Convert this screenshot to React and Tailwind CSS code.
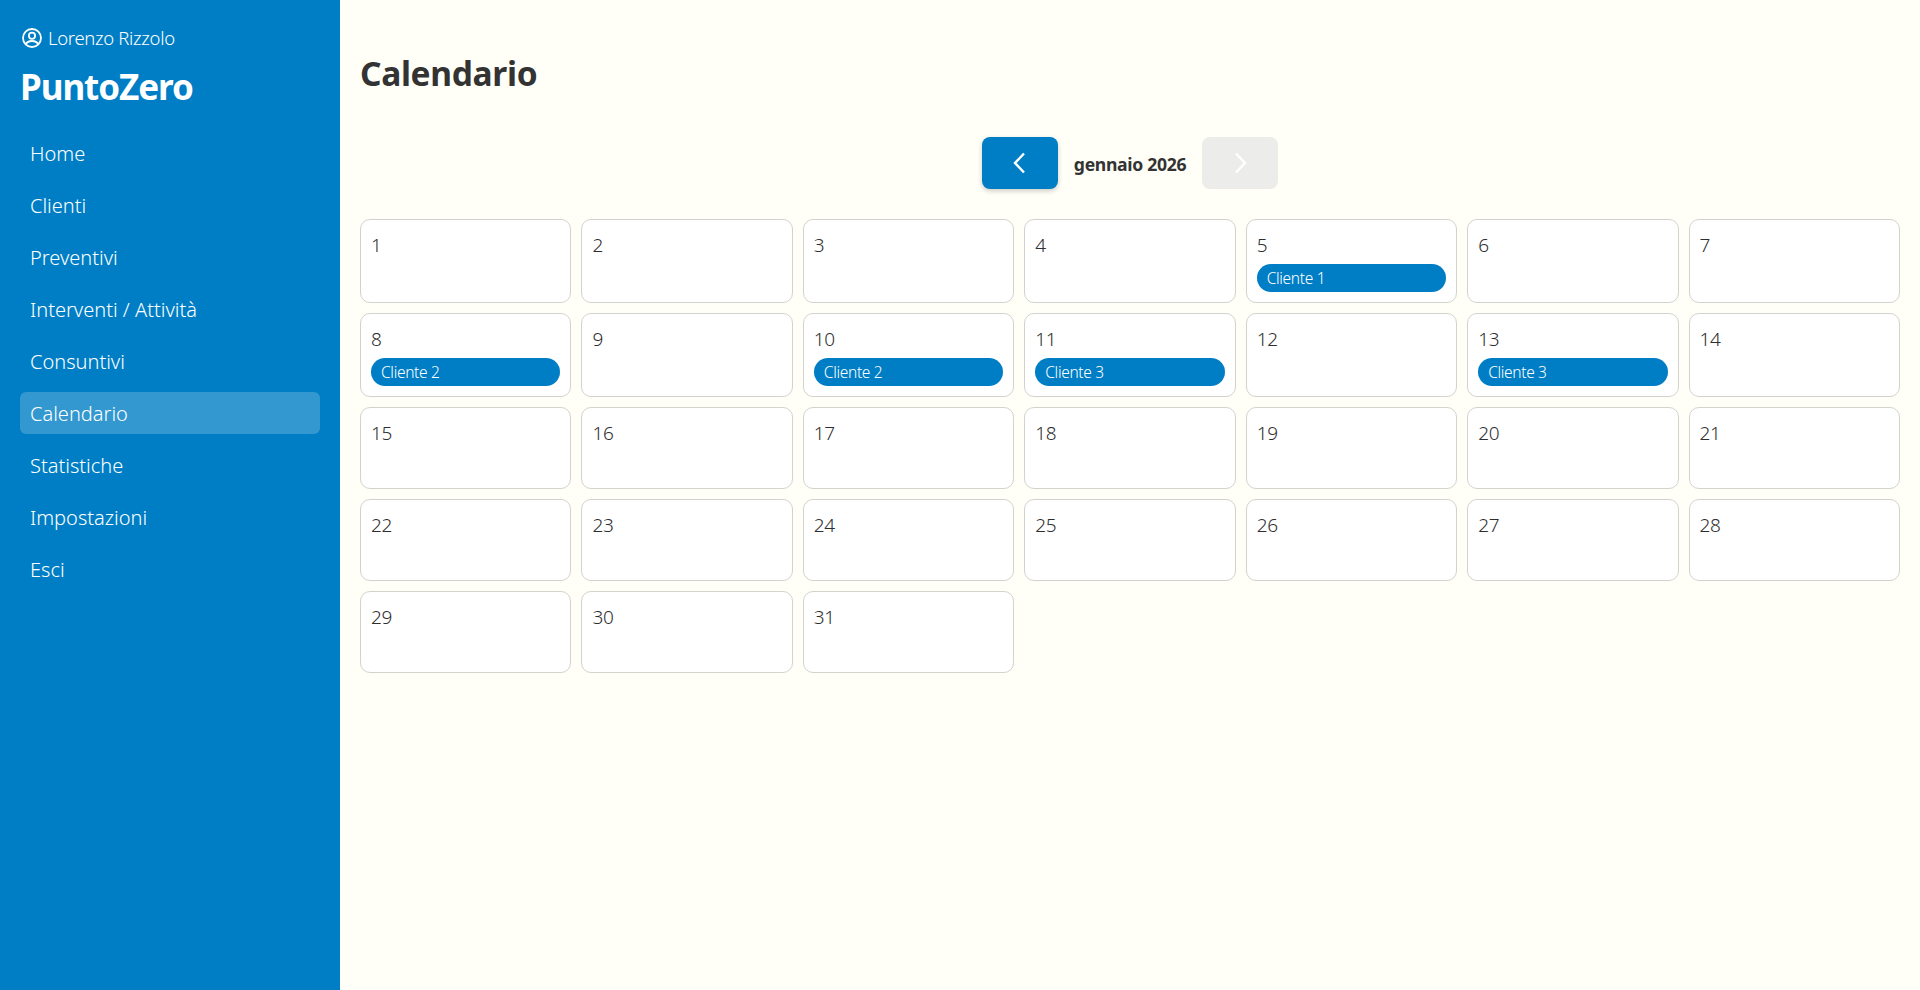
const nav = ["Home","Clienti","Preventivi","Interventi / Attività","Consuntivi","Calendario","Statistiche","Impostazioni","Esci"];
const events = {5:"Cliente 1",8:"Cliente 2",10:"Cliente 2",11:"Cliente 3",13:"Cliente 3"};
const days = Array.from({length:31},(_,i)=>i+1);

function UserIcon(){
  return (
    <svg width="20" height="20" viewBox="0 0 20 20" fill="none" stroke="white" strokeWidth="1.8" className="shrink-0">
      <circle cx="10" cy="10" r="9"/>
      <circle cx="10" cy="7.8" r="3.1"/>
      <path d="M3.9 16.2c1-2.2 3.400-3.200 6.100-3.200s5.100 1 6.100 3.200"/>
    </svg>
  );
}

export default function App(){
  return (
    <div className="flex min-h-[990px] bg-[#fffff8] text-[#2e2e2e] font-['Noto_Sans',sans-serif] font-light tracking-[-0.02em]">
      <aside className="w-[340px] shrink-0 bg-[#007ec5] text-white px-5 pt-[26px]">
        <div className="flex items-center gap-[6px] text-[18.500px] leading-[24px] ml-[2px]"><UserIcon/>Lorenzo Rizzolo</div>
        <div className="text-[35px] leading-[48px] font-bold mt-[13px] tracking-[-0.03em]">PuntoZero</div>
        <nav className="mt-[21px] flex flex-col gap-[10px]">
          {nav.map(n=>(
            <div key={n} className={`h-[42px] px-[10px] pt-[2px] rounded-[6px] flex items-center text-[20px] tracking-normal ${n==="Calendario"?"bg-white/20":""}`}>{n}</div>
          ))}
        </nav>
      </aside>
      <main className="flex-1 px-5">
        <h1 className="text-[33.500px] leading-[48px] font-bold mt-[49px] text-[#333333]">Calendario</h1>
        <div className="flex items-center justify-center gap-[16px] mt-[40px]">
          <button className="w-[76px] h-[52px] rounded-[8px] bg-[#007ec5] flex items-center justify-center shadow-[0_2px_5px_rgba(0,0,0,0.2)]">
            <svg width="24" height="24" viewBox="0 0 24 24" fill="none" stroke="white" strokeWidth="2.4"><path d="M16 2.500l-9 9.500 9 9.500"/></svg>
          </button>
          <span className="text-[17.600px] font-bold relative top-[1px] text-[#333333]">gennaio 2026</span>
          <button className="w-[76px] h-[52px] rounded-[8px] bg-[#ecedea] flex items-center justify-center">
            <svg width="24" height="24" viewBox="0 0 24 24" fill="none" stroke="white" strokeWidth="2.4"><path d="M8 2.500l9 9.500-9 9.500"/></svg>
          </button>
        </div>
        <div className="grid grid-cols-7 gap-[10px] mt-[30px]">
          {days.map(d=>(
            <div key={d} className="bg-white border border-[#d2d2cf] rounded-[10px] px-[10px] pt-[10px] pb-[10px] flex flex-col gap-[4px] min-h-[82px]">
              <div className="text-[19px] leading-[30px]">{d}</div>
              {events[d] && <div className="h-[28px] pt-[2px] rounded-full bg-[#007ec5] text-white text-[15.500px] px-[10px] flex items-center">{events[d]}</div>}
            </div>
          ))}
        </div>
      </main>
    </div>
  );
}
